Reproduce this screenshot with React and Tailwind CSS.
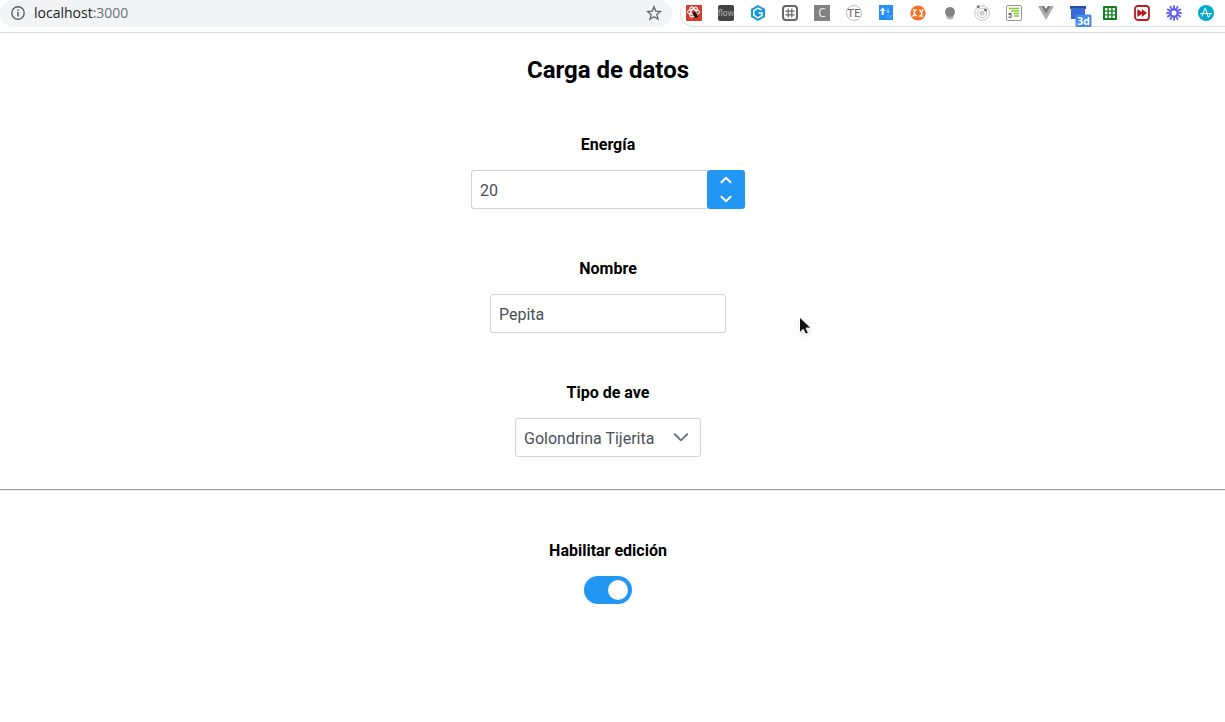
import React, { useState } from 'react'

const spokes = (count) => Array.from({ length: count }, (_, i) => (i * 360) / count)

function Icon({ children }) {
  return (
    <svg viewBox="0 0 16 16" className="block size-4 overflow-visible" aria-hidden="true">
      {children}
    </svg>
  )
}

const extensions = [
  {
    name: 'React debugger',
    icon: (
      <Icon>
        <rect width="16" height="16" rx="1" fill="#d93b2f" />
        <g fill="none" stroke="#fff" strokeWidth="1.1">
          <ellipse cx="7.5" cy="7" rx="6" ry="2.5" />
          <ellipse cx="7.5" cy="7" rx="5.6" ry="2.5" transform="rotate(60 7.5 7)" />
          <ellipse cx="7.5" cy="7" rx="5.6" ry="2.5" transform="rotate(120 7.5 7)" />
        </g>
        <ellipse cx="9.3" cy="10" rx="1.7" ry="3.2" transform="rotate(-35 9.3 10)" fill="#24110f" />
        <path d="M6.5 10l5.5-1M8 12.8l5-2M7 7.2l4 .6" stroke="#24110f" strokeWidth="0.7" />
      </Icon>
    ),
  },
  {
    name: 'Flow',
    icon: (
      <Icon>
        <rect width="16" height="16" rx="2" fill="#434343" />
        <text x="8" y="10.8" textAnchor="middle" fontSize="8.5" fontFamily="Lato, sans-serif" fill="#b4b4b4">flow</text>
      </Icon>
    ),
  },
  {
    name: 'Gitpod',
    icon: (
      <Icon>
        <path d="M8 0l7 4v8l-7 4-7-4V4z" fill="#1696df" />
        <path d="M11.5 5L8 3.2 3.8 5.6v4.8L8 12.8l4-2.3V8H8.5" fill="none" stroke="#fff" strokeWidth="1.5" />
      </Icon>
    ),
  },
  {
    name: 'Grid',
    icon: (
      <Icon>
        <rect x="1" y="1" width="14" height="14" rx="3" fill="#fff" stroke="#666" strokeWidth="2" />
        <path d="M6.2 3.5v9M9.8 3.5v9M3.5 6.2h9M3.5 9.8h9" stroke="#666" strokeWidth="1.2" />
      </Icon>
    ),
  },
  {
    name: 'Codecov',
    icon: (
      <Icon>
        <rect width="16" height="16" fill="#828282" />
        <text x="8" y="12.3" textAnchor="middle" fontSize="12" fontFamily="'Open Sans', sans-serif" fill="#eee">C</text>
      </Icon>
    ),
  },
  {
    name: 'Text editor',
    icon: (
      <Icon>
        <circle cx="8" cy="8" r="7.5" fill="#fff" stroke="#aaa" strokeWidth="0.8" />
        <text x="8" y="12" textAnchor="middle" fontSize="11.5" fontFamily="'Noto Sans', sans-serif" fill="#666">TE</text>
      </Icon>
    ),
  },
  {
    name: 'Sort',
    icon: (
      <Icon>
        <rect x="1" width="14" height="15" fill="#2490f5" />
        <path d="M4.7 2.2L1.8 6h1.9v4h2V6h1.9z" fill="#fff" />
        <path d="M10 3.5v4M8.4 6L10 7.8 11.6 6" fill="none" stroke="#b9ddff" strokeWidth="1" />
        <text x="8.5" y="13" fontSize="5" fontFamily="'Open Sans', sans-serif" fill="#8bc6ff">cx</text>
      </Icon>
    ),
  },
  {
    name: 'Postman interceptor',
    icon: (
      <Icon>
        <circle cx="8" cy="8" r="7.6" fill="#f47023" />
        <g fill="none" stroke="#fff" strokeWidth="1.5">
          <path d="M4.4 9.4a3.8 3.8 0 0 1 2.4-5M11.6 6.6a3.8 3.8 0 0 1-2.4 5" />
          <path d="M9.3 4.8l1.9 1.9 2.2-2.2M6.7 11.2L4.8 9.3l-2.2 2.2" />
          <path d="M3 4.2l2.2 1.6M13 11.8l-2.2-1.6" strokeWidth="1.2" />
        </g>
      </Icon>
    ),
  },
  {
    name: 'Apollo',
    icon: (
      <Icon>
        <circle cx="8" cy="10.6" r="3.9" fill="#b5b5b5" />
        <circle cx="8" cy="7" r="5" fill="#858585" />
      </Icon>
    ),
  },
  {
    name: 'Orbit',
    icon: (
      <Icon>
        <g fill="none" stroke="#bbb" strokeWidth="0.9">
          <circle cx="8" cy="8" r="7.3" />
          <circle cx="8" cy="8" r="4.7" />
        </g>
        <circle cx="8" cy="8" r="2.6" fill="#ccc" />
        <circle cx="4.2" cy="1.7" r="1.5" fill="#777" />
        <circle cx="11.5" cy="5" r="1.4" fill="#666" />
      </Icon>
    ),
  },
  {
    name: 'JSON viewer',
    icon: (
      <Icon>
        <rect x="0.5" y="0.5" width="15" height="15" rx="1.5" fill="#fff" stroke="#999" />
        <path d="M3 3.5h10M5 6h8M8 8.5h5M8 11h5" stroke="#86cc2b" strokeWidth="1.4" />
        <text x="2" y="12.6" fontSize="7" fontWeight="700" fontFamily="Roboto, sans-serif" fill="#555">5</text>
      </Icon>
    ),
  },
  {
    name: 'Vue',
    icon: (
      <Icon>
        <path d="M0 1h3.3L8 9.2 12.7 1H16L8 15z" fill="#aaa" />
        <path d="M3.3 1h3L8 4l1.7-3h3L8 9.2z" fill="#777" />
      </Icon>
    ),
  },
  {
    name: 'Calendar',
    icon: (
      <Icon>
        <path d="M0 1h16v3H0z" fill="#294b9e" />
        <path d="M1 3h14v11H1z" fill="#386bd5" />
        <rect x="5.5" y="9.5" width="16" height="12.5" rx="1.5" fill="#4489ee" />
        <text x="13.5" y="19.8" textAnchor="middle" fontSize="10.5" fontWeight="700" fontFamily="'Open Sans', sans-serif" fill="#fff">3d</text>
      </Icon>
    ),
  },
  {
    name: 'Spreadsheet',
    icon: (
      <Icon>
        <rect x="1" y="1" width="14" height="14" rx="1" fill="#128222" />
        <path d="M3 3h2.4v2.4H3zM6.8 3h2.4v2.4H6.8zM10.6 3H13v2.4h-2.4zM3 6.8h2.4v2.4H3zM6.8 6.8h2.4v2.4H6.8zM10.6 6.8H13v2.4h-2.4zM3 10.6h2.4V13H3zM6.8 10.6h2.4V13H6.8zM10.6 10.6H13V13h-2.4z" fill="#fff" />
      </Icon>
    ),
  },
  {
    name: 'Fast forward',
    icon: (
      <Icon>
        <rect x="1" y="1" width="14" height="14" rx="3" fill="#fff" stroke="#b51d1d" strokeWidth="1.8" />
        <path d="M3.3 4l4.5 3V4l5.2 4-5.2 4V9l-4.5 3z" fill="#b51d1d" />
      </Icon>
    ),
  },
  {
    name: 'Loom',
    icon: (
      <Icon>
        {spokes(12).map((angle) => (
          <path key={angle} d="M8 .2v5" stroke="#625df5" strokeWidth="1.8" transform={`rotate(${angle} 8 8)`} />
        ))}
        <circle cx="8" cy="8" r="3.7" fill="none" stroke="#625df5" strokeWidth="2" />
      </Icon>
    ),
  },
  {
    name: 'Amplitude',
    icon: (
      <Icon>
        <circle cx="8" cy="8" r="8" fill="#00a9ce" />
        <path d="M2.5 8.5h11M4 11c1.5-2 2-7.5 3.2-7.5S9 12 10.5 12c1 0 1.4-2 1.8-3.5" fill="none" stroke="#fff" strokeWidth="1.1" strokeLinecap="round" />
      </Icon>
    ),
  },
]

function BrowserBar() {
  return (
    <header className="flex h-[33px] items-start gap-2 border-b border-[#d9dadf] bg-white">
      <div className="flex h-[27px] min-w-0 flex-1 items-center rounded-full bg-[#f1f3f4] px-2.5 pb-px">
        <button type="button" aria-label="Información del sitio" className="shrink-0">
          <svg viewBox="0 0 16 16" className="size-4" fill="none" stroke="#5f6368" strokeWidth="1.4" aria-hidden="true">
            <circle cx="8" cy="8" r="6.2" />
            <path d="M8 7v4.5M8 4.4V6" strokeWidth="1.6" />
          </svg>
        </button>
        <p className="min-w-0 flex-1 truncate pl-2 font-['Open_Sans',sans-serif] text-sm leading-5 text-[#202124]">
          localhost<span className="text-[#6b7075]">:3000</span>
        </p>
        <button type="button" aria-label="Agregar a favoritos" className="shrink-0">
          <svg viewBox="0 0 16 16" className="size-4" fill="none" stroke="#5f6368" strokeWidth="1.3" aria-hidden="true">
            <path d="M8 1.8l1.8 4.3 4.7.4-3.6 3.1 1.1 4.6L8 11.7l-4 2.5 1.1-4.6-3.6-3.1 4.7-.4z" />
          </svg>
        </button>
      </div>
      <div className="flex h-[27px] shrink-0 items-center gap-4 rounded-l-full border-b border-l border-[#dfe0e3] pr-[11px] pl-[5px]">
        {extensions.map(({ name, icon }) => (
          <button key={name} type="button" aria-label={name}>
            {icon}
          </button>
        ))}
      </div>
    </header>
  )
}

function Field({ label, id, children }) {
  return (
    <div className="flex flex-col items-center gap-[13px]">
      <label htmlFor={id} className="font-bold text-black">{label}</label>
      {children}
    </div>
  )
}

function StepIcon({ up }) {
  return (
    <svg viewBox="0 0 16 16" className="size-4" fill="none" stroke="currentColor" strokeWidth="2" strokeLinecap="round" strokeLinejoin="round" aria-hidden="true">
      <path d={up ? 'M3.5 10.2L8 5.8l4.5 4.4' : 'M3.5 5.8L8 10.2l4.5-4.4'} />
    </svg>
  )
}

export default function App() {
  const [energy, setEnergy] = useState(20)
  const [name, setName] = useState('Pepita')
  const [kind, setKind] = useState('Golondrina Tijerita')
  const [editable, setEditable] = useState(true)

  return (
    <div className="min-h-screen bg-white font-[Roboto,sans-serif] text-base text-[#495057]">
      <BrowserBar />
      <main>
        <section className="flex flex-col items-center gap-12 pt-[22px] pr-[9px] pb-8">
          <h1 className="text-2xl leading-[30px] font-bold text-black">Carga de datos</h1>
          <Field label="Energía" id="energy">
            <div className="flex h-[39px]">
              <input
                id="energy"
                type="text"
                inputMode="numeric"
                disabled={!editable}
                value={energy}
                onChange={(e) => setEnergy(Number(e.target.value) || 0)}
                className="w-[236px] rounded-l-[3px] border border-r-0 border-[#ced4da] px-2 pt-0.5"
              />
              <div className="flex w-[38px] flex-col overflow-hidden rounded-[3px] bg-[#2196f3] text-white">
                <button type="button" aria-label="Aumentar" disabled={!editable} onClick={() => setEnergy(energy + 1)} className="flex flex-1 items-center justify-center">
                  <StepIcon up />
                </button>
                <button type="button" aria-label="Disminuir" disabled={!editable} onClick={() => setEnergy(energy - 1)} className="flex flex-1 items-center justify-center">
                  <StepIcon />
                </button>
              </div>
            </div>
          </Field>
          <Field label="Nombre" id="name">
            <input
              id="name"
              type="text"
              disabled={!editable}
              value={name}
              onChange={(e) => setName(e.target.value)}
              className="h-[39px] w-[236px] rounded-[3px] border border-[#ced4da] px-2 pt-0.5"
            />
          </Field>
          <Field label="Tipo de ave" id="kind">
            <div className="grid items-center">
              <select
                id="kind"
                disabled={!editable}
                value={kind}
                onChange={(e) => setKind(e.target.value)}
                className="col-start-1 row-start-1 h-[39px] w-[186px] appearance-none rounded-[3px] border border-[#ced4da] bg-white pt-0.5 pr-10 pl-2"
              >
                <option>Golondrina Tijerita</option>
                <option>Torcaza</option>
              </select>
              <svg viewBox="0 0 16 16" className="pointer-events-none col-start-1 row-start-1 mr-3 size-4 justify-self-end" fill="none" stroke="#6c757d" strokeWidth="2" strokeLinecap="round" strokeLinejoin="round" aria-hidden="true">
                <path d="M1.8 4.2L8 10.4l6.2-6.2" />
              </svg>
            </div>
          </Field>
        </section>
        <hr className="border-t border-b border-t-[#999] border-b-[#eee]" />
        <section className="pt-12 pr-[9px]">
          <Field label="Habilitar edición" id="editable">
            <input
              id="editable"
              type="checkbox"
              role="switch"
              checked={editable}
              onChange={(e) => setEditable(e.target.checked)}
              className="flex h-7 w-12 cursor-pointer appearance-none items-center rounded-full bg-[#ced4da] px-1 before:size-5 before:rounded-full before:bg-white checked:justify-end checked:bg-[#2196f3]"
            />
          </Field>
        </section>
      </main>
      <svg viewBox="0 0 16 22" className="pointer-events-none absolute top-[316px] left-[798px] h-[22px] w-4" aria-hidden="true">
        <path d="M1.5 1v15.8l3.8-3.5 2.3 5 2.8-1.2-2.3-5h5z" fill="#111" stroke="#fff" strokeWidth="1" className="drop-shadow-sm" />
      </svg>
    </div>
  )
}
